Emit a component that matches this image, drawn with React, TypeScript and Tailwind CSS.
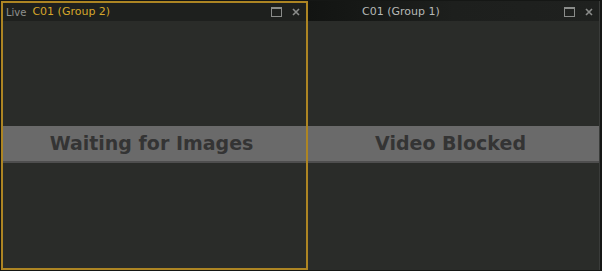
import React from "react";

function MaxIcon() {
  return (
    <svg width="11" height="10" viewBox="0 0 11 10" className="block">
      <rect x="0.5" y="0.5" width="10" height="9" fill="none" stroke="#8a8c8a" strokeWidth="1" />
      <rect x="0.5" y="0.5" width="10" height="1.5" fill="#8a8c8a" />
    </svg>
  );
}

function CloseIcon() {
  return (
    <svg width="8" height="8" viewBox="0 0 8 8" className="block">
      <path d="M1 1L7 7M7 1L1 7" stroke="#8a8c8a" strokeWidth="1.6" />
    </svg>
  );
}

const font = { fontFamily: "'DejaVu Sans', sans-serif" };

function Band({ message }: { message: string }) {
  return (
    <div className="flex-1 flex flex-col">
      <div className="h-[105px]" />
      <div className="h-[37px] bg-[#6a6a6a] border-b-2 border-[#4e4e4e] flex items-center justify-center">
        <span className="text-[19px] font-bold text-[#343434] -translate-x-[3px]" style={font}>
          {message}
        </span>
      </div>
      <div className="flex-1" />
    </div>
  );
}

export default function App() {
  return (
    <div className="w-[602px] h-[271px] bg-[#151715] flex pt-px pl-px pb-[1px] pr-[2px]">
      <div className="w-[307px] h-full flex flex-col border-2 border-[#ad8523] bg-[#2a2c29]">
        <div className="h-[18px] flex items-center shrink-0 bg-[#1e201e]">
          <div className="flex items-center pl-[3px] gap-[6px]">
            <span className="text-[10px] text-[#8e908e]" style={font}>
              Live
            </span>
            <span className="text-[11px] text-[#d6a72a]" style={font}>
              C01 (Group 2)
            </span>
          </div>
          <div className="ml-auto flex items-center gap-[10px] pr-[6px]">
            <MaxIcon />
            <CloseIcon />
          </div>
        </div>
        <Band message="Waiting for Images" />
      </div>
      <div className="w-[292px] h-full flex flex-col border-r border-[#3a3c3a] bg-[#2a2c29] pb-[2px]">
        <div className="h-[20px] flex items-center shrink-0 bg-gradient-to-r from-[#121412] via-[#1d1f1d] to-[#1f211f]">
          <div className="flex-1 flex justify-start pl-[54px] pt-[2px]">
            <span className="text-[11px] text-[#b6b8b6]" style={font}>
              C01 (Group 1)
            </span>
          </div>
          <div className="ml-auto flex items-center gap-[10px] pr-[6px] pt-[2px]">
            <MaxIcon />
            <CloseIcon />
          </div>
        </div>
        <Band message="Video Blocked" />
      </div>
    </div>
  );
}
